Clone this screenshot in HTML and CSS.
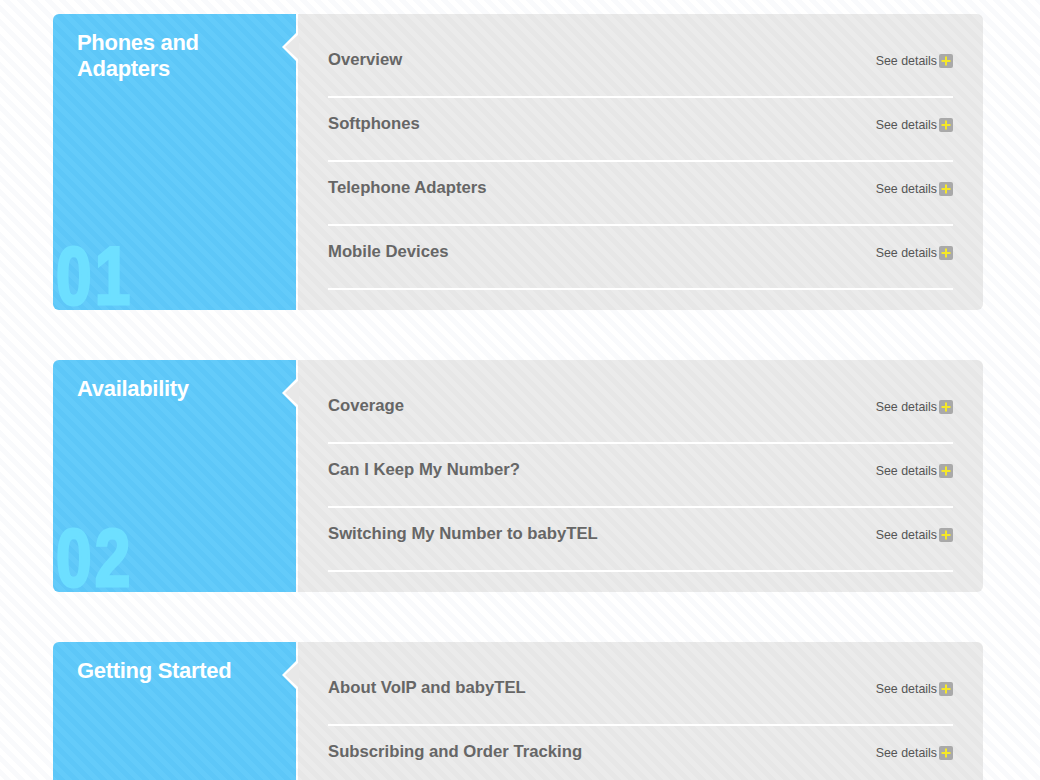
FILE: index.html
```html
<!DOCTYPE html>
<html lang="en">
<head>
  <meta charset="UTF-8">
  <title>Support - babyTEL</title>
  <link rel="stylesheet" href="styles.css">
</head>
<body>
  <main class="faq">
    <!-- Section 01 -->
    <section class="faq-group">
      <div class="faq-side">
        <h2>Phones and Adapters</h2>
        <span class="faq-num">01</span>
      </div>
      <ul class="faq-list">
        <li><span class="faq-title">Overview</span><a href="#" class="more">See details <svg class="plus" viewBox="0 0 14 14"><rect width="14" height="14" rx="2"/><path d="M7 2.5v9M2.5 7h9"/></svg></a></li>
        <li><span class="faq-title">Softphones</span><a href="#" class="more">See details <svg class="plus" viewBox="0 0 14 14"><rect width="14" height="14" rx="2"/><path d="M7 2.5v9M2.5 7h9"/></svg></a></li>
        <li><span class="faq-title">Telephone Adapters</span><a href="#" class="more">See details <svg class="plus" viewBox="0 0 14 14"><rect width="14" height="14" rx="2"/><path d="M7 2.5v9M2.5 7h9"/></svg></a></li>
        <li><span class="faq-title">Mobile Devices</span><a href="#" class="more">See details <svg class="plus" viewBox="0 0 14 14"><rect width="14" height="14" rx="2"/><path d="M7 2.5v9M2.5 7h9"/></svg></a></li>
      </ul>
    </section>

    <!-- Section 02 -->
    <section class="faq-group">
      <div class="faq-side">
        <h2>Availability</h2>
        <span class="faq-num">02</span>
      </div>
      <ul class="faq-list">
        <li><span class="faq-title">Coverage</span><a href="#" class="more">See details <svg class="plus" viewBox="0 0 14 14"><rect width="14" height="14" rx="2"/><path d="M7 2.5v9M2.5 7h9"/></svg></a></li>
        <li><span class="faq-title">Can I Keep My Number?</span><a href="#" class="more">See details <svg class="plus" viewBox="0 0 14 14"><rect width="14" height="14" rx="2"/><path d="M7 2.5v9M2.5 7h9"/></svg></a></li>
        <li><span class="faq-title">Switching My Number to babyTEL</span><a href="#" class="more">See details <svg class="plus" viewBox="0 0 14 14"><rect width="14" height="14" rx="2"/><path d="M7 2.5v9M2.5 7h9"/></svg></a></li>
      </ul>
    </section>

    <!-- Section 03 -->
    <section class="faq-group">
      <div class="faq-side">
        <h2>Getting Started</h2>
        <span class="faq-num">03</span>
      </div>
      <ul class="faq-list">
        <li><span class="faq-title">About VoIP and babyTEL</span><a href="#" class="more">See details <svg class="plus" viewBox="0 0 14 14"><rect width="14" height="14" rx="2"/><path d="M7 2.5v9M2.5 7h9"/></svg></a></li>
        <li><span class="faq-title">Subscribing and Order Tracking</span><a href="#" class="more">See details <svg class="plus" viewBox="0 0 14 14"><rect width="14" height="14" rx="2"/><path d="M7 2.5v9M2.5 7h9"/></svg></a></li>
        <li><span class="faq-title">Account Management</span><a href="#" class="more">See details <svg class="plus" viewBox="0 0 14 14"><rect width="14" height="14" rx="2"/><path d="M7 2.5v9M2.5 7h9"/></svg></a></li>
      </ul>
    </section>
  </main>
</body>
</html>
```

FILE: styles.css
```css
/* General */
* {
  margin: 0;
  padding: 0;
  box-sizing: border-box;
}

body {
  font-family: "Liberation Sans", Arial, sans-serif;
  background-color: #fff;
  background-image: repeating-linear-gradient(45deg, #fff 0 5px, #f9fafc 5px 10px);
  color: #666;
}

.faq {
  width: 930px;
  margin-left: 53px;
  padding-top: 14px;
}

/* Group card */
.faq-group {
  display: flex;
  gap: 2px;
  margin-bottom: 50px;
}

.faq-side {
  width: 243px;
  flex-shrink: 0;
  position: relative;
  overflow: hidden;
  padding: 16px 24px;
  border-radius: 6px 0 0 6px;
  background-color: #5ec8f8;
  background-image: repeating-linear-gradient(45deg, #5dc7f8 0 5px, #63cbfa 5px 10px);
}

.faq-side h2 {
  color: #fff;
  font-size: 22px;
  line-height: 26px;
  font-weight: bold;
  letter-spacing: -0.3px;
}

.faq-num {
  position: absolute;
  left: 3px;
  bottom: -7px;
  font-size: 82px;
  font-weight: bold;
  line-height: 1;
  color: #6ddfff;
  -webkit-text-stroke: 3px #6ddfff;
  letter-spacing: 4px;
  transform: scaleX(0.78);
  transform-origin: left bottom;
}

/* Item list */
.faq-list {
  flex: 1;
  position: relative;
  list-style: none;
  padding: 20px 30px;
  border-radius: 0 6px 6px 0;
  background-color: #e8e8e8;
  background-image: repeating-linear-gradient(45deg, #e7e7e7 0 5px, #ebebeb 5px 10px);
}

/* notch arrow */
.faq-list::before,
.faq-list::after {
  content: "";
  position: absolute;
  width: 0;
  height: 0;
  border-style: solid;
  border-color: transparent;
}

.faq-list::before {
  left: -16px;
  top: 17px;
  border-width: 16px 16px 16px 0;
  border-right-color: #fff;
}

.faq-list::after {
  left: -13px;
  top: 20px;
  border-width: 13px 14px 13px 0;
  border-right-color: #e8e8e8;
}

.faq-list li {
  display: flex;
  justify-content: space-between;
  align-items: center;
  height: 64px;
  padding: 16px 0 26px;
  border-bottom: 2px solid #fff;
}

.faq-title {
  font-size: 16.7px;
  line-height: 20px;
  font-weight: bold;
  color: #666;
}

.more {
  display: flex;
  align-items: center;
  gap: 2px;
  margin-top: 2px;
  font-size: 12.4px;
  color: #555;
  text-decoration: none;
}

.plus {
  width: 14px;
  height: 14px;
}

.plus rect {
  fill: #a9a9a9;
}

.plus path {
  stroke: #f6e827;
  stroke-width: 2;
}
```
